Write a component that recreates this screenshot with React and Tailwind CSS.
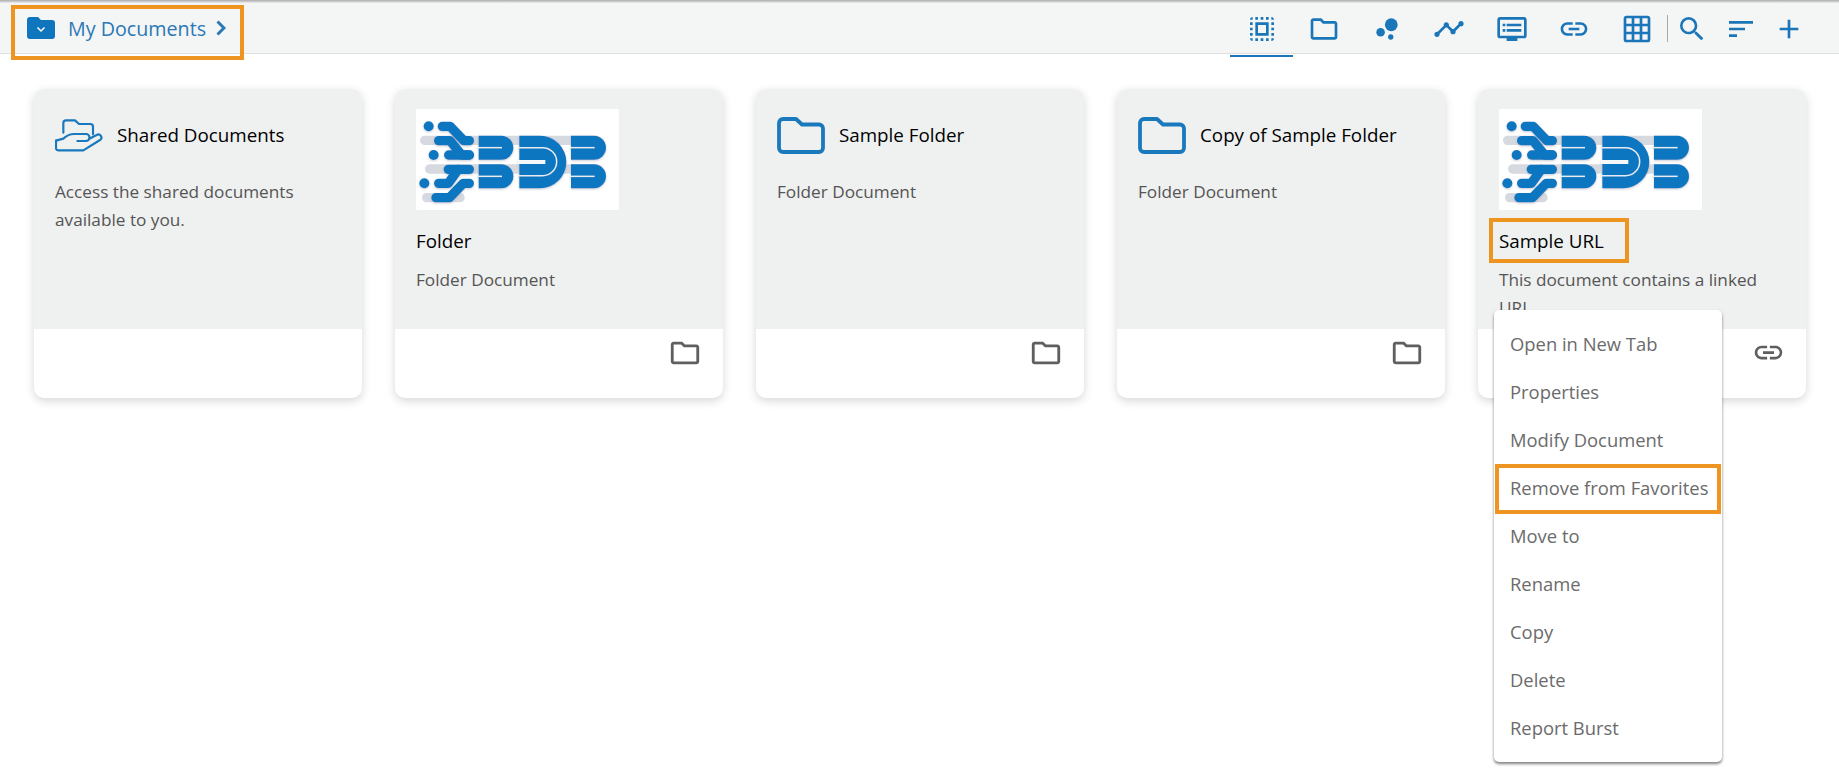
import React from "react";
import { MdOutlineSelectAll, MdOutlineFolder, MdBubbleChart, MdTimeline, MdOutlineDvr, MdLink, MdGridOn, MdSearch, MdSort, MdAdd } from "react-icons/md";

function Logo() {
  return (
    <div className="w-[203px] h-[101px] bg-white rounded-[1px] shrink-0">
      <svg viewBox="48 42 609 303" width="203" height="101">
        <defs>
          <filter id="s" x="-5%" y="-5%" width="110%" height="115%"><feDropShadow dx="0" dy="3" stdDeviation="3" floodColor="#8a94a6" floodOpacity="0.5" /></filter>
        </defs>
        <g stroke="#d6d9df" strokeWidth="28" strokeLinecap="round" fill="none">
          <path d="M74 136H590" />
          <path d="M89 222H590" />
          <path d="M80 308H180" />
        </g>
        <g filter="url(#s)">
          <g fill="#1176c0">
            <circle cx="86" cy="94" r="15" />
            <circle cx="101" cy="180" r="15" />
            <circle cx="73" cy="265" r="15" />
          </g>
          <g stroke="#1176c0" strokeWidth="28" strokeLinecap="round" strokeLinejoin="round" fill="none">
            <path d="M127 94H150L192 137H208" />
            <path d="M116 137H150L185 180H208" />
            <path d="M146 180H208" />
            <path d="M145 223H208" />
            <path d="M116 265H145L175 223" />
            <path d="M108 308H148L190 265H208" />
          </g>
          <g fill="#1176c0">
            <path d="M236 122H304a36 36 0 0 1 0 72H236Z" />
            <path d="M236 208H304a36 36 0 0 1 0 72H236Z" />
            <path d="M358 122H420a79 79 0 0 1 0 158H358Z" />
            <path d="M513 122H582a36 36 0 0 1 0 72H513Z" />
            <path d="M513 208H582a36 36 0 0 1 0 72H513Z" />
          </g>
          <g stroke="#e8ebef" strokeWidth="4.5" fill="none">
            <path d="M232 158H306" />
            <path d="M232 244H306" />
            <path d="M509 158H584" />
            <path d="M509 244H584" />
            <path d="M354 158H428a42 42 0 0 1 0 84H354" />
          </g>
          <path d="M354 201H436" stroke="#f6f7f8" strokeWidth="12" fill="none" />
        </g>
      </svg>
    </div>
  );
}

function SharedIcon() {
  return (
    <svg viewBox="165 362 144 97" width="48" height="33" fill="none" stroke="#1a78bd" strokeWidth="6.5" strokeLinecap="round" strokeLinejoin="round" className="shrink-0">
      <path d="M190 402V373a8 8 0 0 1 8-8H225L237 376H271a8 8 0 0 1 8 8V407" />
      <path d="M168 426V448a7 7 0 0 0 7 7H250L300 424a9 9 0 0 0-10-15L268 420" />
      <path d="M168 426L190 420Q205 406 222 406H258a10 10 0 0 1 0 21H232" />
    </svg>
  );
}

function FolderLine() {
  return (
    <svg viewBox="0 0 48 37" width="48" height="37" fill="none" stroke="#1a78bd" strokeWidth="3.8" strokeLinejoin="round" className="shrink-0">
      <path d="M2 6a4 4 0 0 1 4-4H19l6 5.5H42a4 4 0 0 1 4 4V31a4 4 0 0 1-4 4H6a4 4 0 0 1-4-4Z" />
    </svg>
  );
}

function Card({ icon, title, desc, logo, footer, children }) {
  return (
    <div className="relative w-[328px] h-[309px] rounded-[10px] bg-white shadow-[0_3px_10px_rgba(0,0,0,0.16)] shrink-0">
      <div className="h-[240px] bg-[#eff0f0] rounded-t-[10px] px-[21px] overflow-hidden">
        {logo ? (
          <div className="pt-[20px]">
            <Logo />
            <div className="mt-[18px] h-[27px] leading-[27px] text-[18.8px] font-medium text-black">{title}</div>
          </div>
        ) : (
          <div className="pt-[28px] flex items-center gap-[14px] h-[65px]">
            {icon}
            <div className="text-[18.8px] font-medium text-black leading-[27px]">{title}</div>
          </div>
        )}
        <div className={`${logo ? "mt-[11px]" : "mt-[24px]"} text-[17.2px] leading-[28px] text-[#555]`}>{desc}</div>
      </div>
      <div className="h-[69px] flex justify-end pt-[7px] pr-[21px] text-[#5f5f5f]">{footer}</div>
      {children}
    </div>
  );
}

const items = ["Open in New Tab", "Properties", "Modify Document", "Remove from Favorites", "Move to", "Rename", "Copy", "Delete", "Report Burst"];

function Tool({ icon, active }) {
  return (
    <div className="relative w-[62.5px] h-[50px] pt-[2px] flex items-center justify-center text-[#1a75b9]">
      {icon}
      {active && <div className="absolute -left-[1px] right-0 -bottom-[4px] h-[2px] bg-[#1a75b9]" />}
    </div>
  );
}

export default function App() {
  return (
    <div className="relative w-[1839px] h-[781px] bg-white overflow-hidden" style={{ fontFamily: '"Open Sans", "Noto Sans", sans-serif' }}>
      <div className="h-[3px] bg-gradient-to-b from-[#aaaaaa] to-[#eeeeee]" />
      <header className="h-[51px] bg-[#f4f5f5] border-b border-[#e0e0e0] flex items-center justify-between pl-[27px] pr-[34px]">
        <div className="flex items-center text-[#2a78b5]">
          <svg viewBox="0 0 28 22" width="28" height="22" className="shrink-0">
            <path d="M0 3a3 3 0 0 1 3-3H11l3 3H25a3 3 0 0 1 3 3V19a3 3 0 0 1-3 3H3a3 3 0 0 1-3-3Z" fill="#0f75bc" />
            <path d="M10.5 10.5L14 14l3.5-3.5" stroke="#fff" strokeWidth="1.5" fill="none" />
          </svg>
          <span className="ml-[13px] pt-[2px] text-[19.7px] leading-[28px]">My Documents</span>
          <svg viewBox="0 0 10 16" width="10" height="16" className="ml-[10px]"><path d="M1.5 1.5L8 8l-6.5 6.5" stroke="#2a78b5" strokeWidth="3" fill="none" /></svg>
        </div>
        <div className="flex items-center">
          <Tool active icon={<MdOutlineSelectAll size={32} />} />
          <Tool icon={<MdOutlineFolder size={32} />} />
          <Tool icon={<MdBubbleChart size={32} />} />
          <Tool icon={<MdTimeline size={32} />} />
          <Tool icon={<MdOutlineDvr size={32} />} />
          <Tool icon={<MdLink size={32} />} />
          <Tool icon={<MdGridOn size={32} />} />
          <div className="w-px h-[27px] bg-[#a9a9a9] -ml-[1px] mr-[8px]" />
          <div className="flex items-center gap-[16.5px] pt-[2px] text-[#1a75b9]">
            <MdSearch size={32} />
            <MdSort size={32} />
            <MdAdd size={32} />
          </div>
        </div>
      </header>
      <main className="flex gap-[33px] pl-[34px] pt-[35px]">
        <Card icon={<SharedIcon />} title="Shared Documents" desc={<>Access the shared documents<br />available to you.</>} />
        <Card logo title="Folder" desc="Folder Document" footer={<MdOutlineFolder size={34} />} />
        <Card icon={<FolderLine />} title="Sample Folder" desc="Folder Document" footer={<MdOutlineFolder size={34} />} />
        <Card icon={<FolderLine />} title="Copy of Sample Folder" desc="Folder Document" footer={<MdOutlineFolder size={34} />} />
        <Card logo title="Sample URL" desc={<>This document contains a linked<br />URL</>} footer={<MdLink size={33} />}>
          <div className="absolute left-[11px] top-[129px] w-[140px] h-[45px] border-[4px] border-[#ee9420]" />
          <div className="absolute left-[16px] top-[221px] w-[228px] h-[452px] pt-[10px] pb-[8px] bg-white rounded-[5px] shadow-[0_2px_3px_rgba(0,0,0,0.5)] z-10">
            {items.map((t) => (
              <div key={t} className="relative h-[48px] pl-[16px] flex items-center text-[18.4px] text-[#6b6b6b]">
                {t}
                {t.startsWith("Remove") && <div className="absolute left-[1px] top-0 w-[226px] h-[50px] border-[4px] border-[#ee9420]" />}
              </div>
            ))}
          </div>
        </Card>
      </main>
      <div className="absolute left-[11px] top-[5px] w-[233px] h-[55px] border-[4px] border-[#ee9420]" />
    </div>
  );
}
